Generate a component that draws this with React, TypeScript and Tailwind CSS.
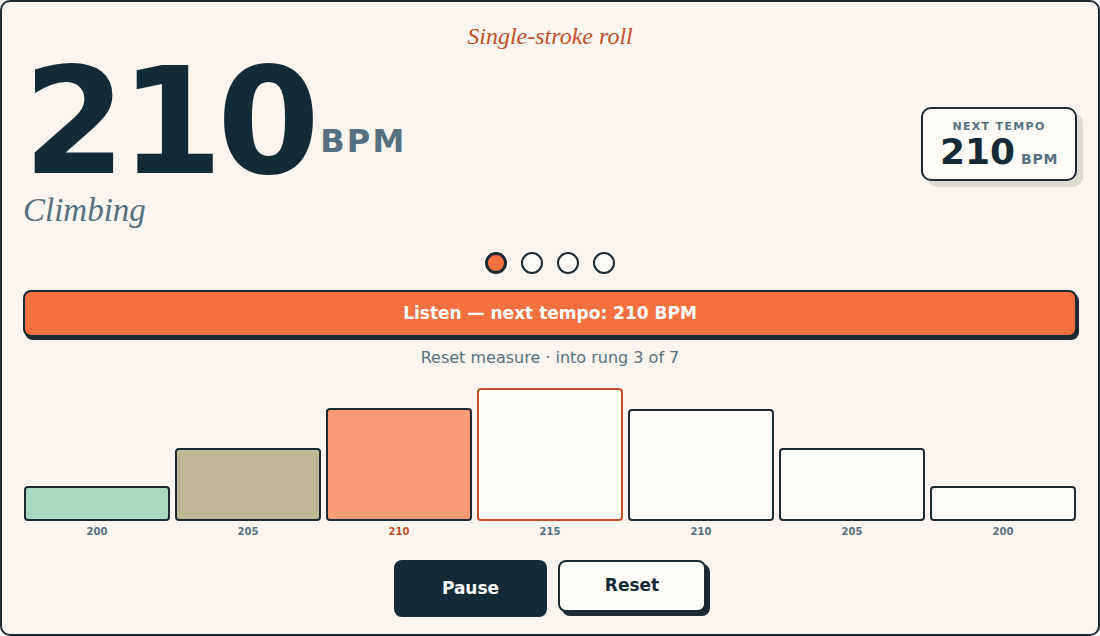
import React from "react";

const sans = { fontFamily: '"DejaVu Sans", Verdana, sans-serif' };
const serif = { fontFamily: '"Liberation Serif", "Times New Roman", serif' };

interface Rung {
    bpm: number;
    height: number;
    fill: string;
    border: string;
    label: string;
}

const rungs: Rung[] = [
    { bpm: 200, height: 35, fill: "bg-[#a8d8c0]", border: "border-[#1b2a33]", label: "text-[#56707f]" },
    { bpm: 205, height: 73, fill: "bg-[#bfb898]", border: "border-[#1b2a33]", label: "text-[#56707f]" },
    { bpm: 210, height: 113, fill: "bg-[#f79a76]", border: "border-[#1b2a33]", label: "text-[#c4502a]" },
    { bpm: 215, height: 133, fill: "bg-[#fffdf8]", border: "border-[#c4502a]", label: "text-[#56707f]" },
    { bpm: 210, height: 112, fill: "bg-[#fffdf8]", border: "border-[#1b2a33]", label: "text-[#56707f]" },
    { bpm: 205, height: 73, fill: "bg-[#fffdf8]", border: "border-[#1b2a33]", label: "text-[#56707f]" },
    { bpm: 200, height: 35, fill: "bg-[#fffdf8]", border: "border-[#1b2a33]", label: "text-[#56707f]" },
];

function NextTempo() {
    return (
        <div className="mt-[57px] w-[156px] h-[74px] rounded-[10px] border-2 border-[#1b2a33] bg-[#fffdf8] shadow-[6px_6px_0_#dedbd3] flex flex-col items-center pt-[11px]">
            <div className="text-[11px] leading-[14px] font-bold tracking-[0.12em] text-[#56707f]">NEXT TEMPO</div>
            <div className="flex items-end leading-none">
                <span className="text-[36px] font-bold text-[#152a37] leading-[36px]">210</span>
                <span className="ml-[6px] mb-[4px] text-[14px] font-bold tracking-[0.05em] text-[#56707f]">BPM</span>
            </div>
        </div>
    );
}

export default function App() {
    return (
        <div
            style={sans}
            className="w-[1100px] h-[636px] rounded-[10px] border-2 border-[#1b2a33] bg-[#faf6ef] px-[21px] pt-[21px] flex flex-col overflow-hidden"
        >
            <div style={serif} className="text-center italic text-[24px] leading-[26px] text-[#c4502a]">
                Single-stroke roll
            </div>

            <div className="flex justify-between items-start mt-px">
                <div className="flex flex-col">
                    <div className="flex items-end">
                        <span className="text-[148px] leading-[144px] font-bold tracking-[-0.04em] text-[#152a37]">210</span>
                        <span className="ml-[6px] mb-[37px] text-[32px] leading-none font-bold tracking-[0.07em] text-[#56707f]">
                            BPM
                        </span>
                    </div>
                    <div style={serif} className="italic text-[33px] leading-none text-[#56707f]">
                        Climbing
                    </div>
                </div>
                <NextTempo />
            </div>

            <div className="mt-[25px] flex justify-center gap-[14px]">
                <span className="w-[22px] h-[22px] rounded-full border-[3px] border-[#1b2a33] bg-[#f4703f]" />
                <span className="w-[22px] h-[22px] rounded-full border-2 border-[#1b2a33] bg-[#fffdf8]" />
                <span className="w-[22px] h-[22px] rounded-full border-2 border-[#1b2a33] bg-[#fffdf8]" />
                <span className="w-[22px] h-[22px] rounded-full border-2 border-[#1b2a33] bg-[#fffdf8]" />
            </div>

            <button className="mt-[16px] h-[47px] w-[1054px] rounded-[8px] border-2 border-[#1b2a33] bg-[#f4703f] shadow-[2px_3px_0_#1b2a33] text-white text-[17px] font-bold">
                Listen — next tempo: 210 BPM
            </button>

            <div className="mt-[11px] text-center text-[16px] leading-[20px] text-[#56707f]">
                Reset measure · into rung 3 of 7
            </div>

            <div className="mt-[20px] px-px flex items-end gap-[5px]">
                {rungs.map((r, i) => (
                    <div key={i} className="flex-1 flex flex-col">
                        <div
                            className={`rounded-[4px] border-2 ${r.fill} ${r.border}`}
                            style={{ height: r.height }}
                        />
                        <div className={`mt-[4px] text-center text-[10px] leading-[14px] font-bold ${r.label}`}>{r.bpm}</div>
                    </div>
                ))}
            </div>

            <div className="mt-[21px] flex justify-center items-start gap-[11px]">
                <button className="w-[153px] h-[57px] rounded-[8px] bg-[#152a37] text-white text-[17px] font-bold">
                    Pause
                </button>
                <button className="w-[148px] h-[52px] rounded-[8px] border-2 border-[#1b2a33] bg-[#fffdf8] shadow-[4px_4px_0_#1b2a33] text-[#152a37] text-[17px] font-bold">
                    Reset
                </button>
            </div>
        </div>
    );
}
